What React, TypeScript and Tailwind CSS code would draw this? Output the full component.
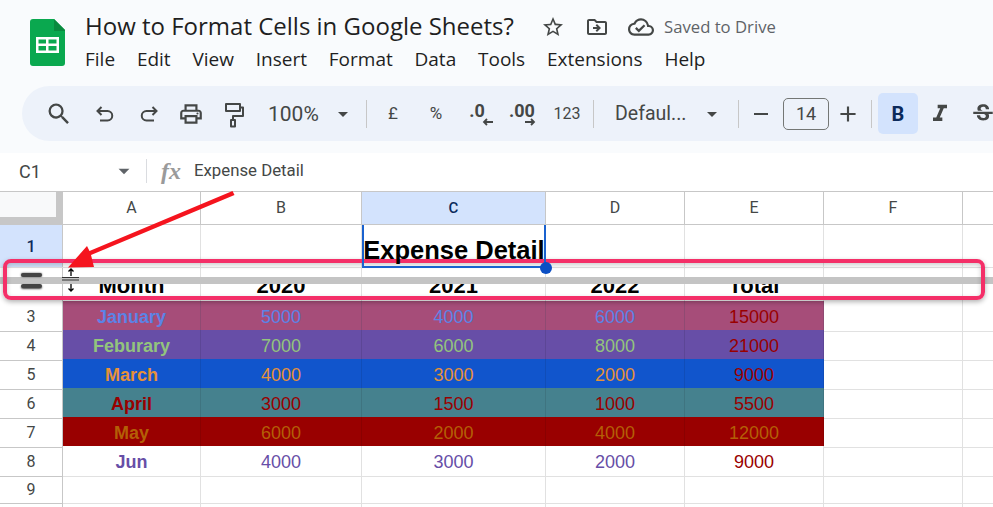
import {
  MdAdd,
  MdArrowDropDown,
  MdFormatItalic,
  MdOutlineCloudDone,
  MdOutlineDriveFileMove,
  MdOutlinePrint,
  MdRemove,
  MdSearch,
  MdStarBorder,
  MdStrikethroughS,
} from 'react-icons/md'

const GRID =
  'grid grid-cols-[63px_138px_161px_184px_139px_139px_139px_139px_30px]'

const MENU = ['File', 'Edit', 'View', 'Insert', 'Format', 'Data', 'Tools', 'Extensions', 'Help']
const COLUMNS = ['A', 'B', 'C', 'D', 'E', 'F', '']
const HEADINGS = ['Month', '2020', '2021', '2022', 'Total']

type Row = {
  n: number
  bg: string
  color: string
  lastColor: string
  line: string
  cells: string[]
}

const ROWS: Row[] = [
  { n: 3, bg: 'bg-[#a64d79]', color: 'text-[#5b83e6]', lastColor: 'text-[#990000]', line: 'border-[#8f4a72]', cells: ['January', '5000', '4000', '6000', '15000'] },
  { n: 4, bg: 'bg-[#674ea7]', color: 'text-[#93c47d]', lastColor: 'text-[#990000]', line: 'border-[#5c4696]', cells: ['Feburary', '7000', '6000', '8000', '21000'] },
  { n: 5, bg: 'bg-[#1155cc]', color: 'text-[#e69138]', lastColor: 'text-[#990000]', line: 'border-[#104db8]', cells: ['March', '4000', '3000', '2000', '9000'] },
  { n: 6, bg: 'bg-[#45818e]', color: 'text-[#990000]', lastColor: 'text-[#990000]', line: 'border-[#3f7480]', cells: ['April', '3000', '1500', '1000', '5500'] },
  { n: 7, bg: 'bg-[#990000]', color: 'text-[#b45f06]', lastColor: 'text-[#b45f06]', line: 'border-[#8a0000]', cells: ['May', '6000', '2000', '4000', '12000'] },
  { n: 8, bg: 'bg-white', color: 'text-[#674ea7]', lastColor: 'text-[#990000]', line: 'border-[#e1e1e1]', cells: ['Jun', '4000', '3000', '2000', '9000'] },
]

function SheetsLogo() {
  return (
    <svg width="35" height="47" viewBox="0 0 35 47" className="mt-[19px] flex-none">
      <path d="M3 0h21l11 11v33a3 3 0 0 1-3 3H3a3 3 0 0 1-3-3V3a3 3 0 0 1 3-3z" fill="#0aa84f" />
      <path d="M24 0l11 11v1H24z" fill="#0a8a3f" />
      <path d="M6 18h23v16H6zm2.500 2.500v4h7.500v-4zm10 0v4h8v-4zm-10 6.500v4.500h7.500V27zm10 0v4.500h8V27z" fill="#fff" fillRule="evenodd" />
    </svg>
  )
}

function UndoIcon({ flip }: { flip?: boolean }) {
  return (
    <svg width="22" height="22" viewBox="0 0 22 22" className={flip ? '-scale-x-100' : ''}>
      <path d="M7.500 4L3.500 8l4 4M3.500 8H13.500a4.750 4.750 0 0 1 0 9.500H6" fill="none" stroke="#444746" strokeWidth="2" />
    </svg>
  )
}

function PaintIcon() {
  return (
    <svg width="20" height="26" viewBox="0 0 20 26" className="mt-[2px]">
      <path
        d="M2 2h14v7H2zM16 5.500h3v8.500H9v4M7 18h4v6.500H7z"
        fill="none"
        stroke="#444746"
        strokeWidth="2"
        strokeLinejoin="round"
      />
    </svg>
  )
}

function Separator({ left, right }: { left: number; right: number }) {
  return <div className="h-[28px] w-px flex-none bg-[#c7c7c7]" style={{ marginLeft: left, marginRight: right }} />
}

function Slot({ width, children }: { width: number; children: React.ReactNode }) {
  return (
    <div className="flex flex-none items-center justify-center" style={{ width }}>
      {children}
    </div>
  )
}

function Toolbar() {
  return (
    <div className="ml-[22px] flex h-[55px] items-center overflow-hidden rounded-l-[28px] bg-[#edf2fa] pl-[15px] font-['Roboto',sans-serif] text-[#444746]">
      <Slot width={44}><MdSearch className="size-[28px] text-[#444746]" /></Slot>
      <Slot width={48}><UndoIcon /></Slot>
      <Slot width={40}><UndoIcon flip /></Slot>
      <Slot width={44}><MdOutlinePrint className="size-[26px]" /></Slot>
      <Slot width={42}><PaintIcon /></Slot>
      <span className="ml-[13px] mt-[2px] w-[63px] flex-none text-[21px]">100%</span>
      <MdArrowDropDown className="size-[24px] flex-none" />
      <Separator left={11} right={0} />
      <Slot width={52}><span className="text-[17px]">£</span></Slot>
      <Slot width={34}><span className="text-[17px]">%</span></Slot>
      <Slot width={48}>
        <span className="relative -mt-[5px] text-[18px] font-bold leading-none">
          .0
          <svg width="12" height="8" viewBox="0 0 12 8" className="absolute -right-[9px] top-[16px]">
            <path d="M11 4H2M5 1L2 4l3 3" fill="none" stroke="#444746" strokeWidth="1.8" />
          </svg>
        </span>
      </Slot>
      <Slot width={42}>
        <span className="relative -mt-[5px] text-[18px] font-bold leading-none">
          .00
          <svg width="12" height="8" viewBox="0 0 12 8" className="absolute -right-[1px] top-[16px]">
            <path d="M1 4h9M7 1l3 3-3 3" fill="none" stroke="#444746" strokeWidth="1.8" />
          </svg>
        </span>
      </Slot>
      <Slot width={48}><span className="text-[16px]">123</span></Slot>
      <Separator left={2} right={0} />
      <span className="ml-[21px] w-[85px] flex-none text-[19.5px]">Defaul...</span>
      <MdArrowDropDown className="size-[24px] flex-none" />
      <Separator left={14} right={0} />
      <Slot width={44}><MdRemove className="size-[24px]" /></Slot>
      <div className="flex h-[32px] w-[46px] flex-none items-center justify-center rounded-[5px] border border-[#747775] text-[18px]">14</div>
      <Slot width={38}><MdAdd className="size-[26px]" /></Slot>
      <Separator left={4} right={6} />
      <div className="flex h-[41px] w-[40px] flex-none items-center justify-center rounded-[5px] bg-[#d3e3fd] text-[20px] font-bold text-[#0b2a5b]">B</div>
      <Slot width={44}><MdFormatItalic className="size-[28px]" /></Slot>
      <Slot width={42}><MdStrikethroughS className="size-[26px]" /></Slot>
    </div>
  )
}

function FormulaBar() {
  return (
    <div className="flex h-[39px] items-center border-b border-[#c7c7c7] bg-white pb-[2px] font-['Roboto',sans-serif] text-[#444746]">
      <span className="ml-[19px] w-[92px] flex-none text-[18px]">C1</span>
      <MdArrowDropDown className="size-[26px] flex-none text-[#5f6368]" />
      <div className="ml-[9px] h-[24px] w-px flex-none bg-[#dadce0]" />
      <span className="ml-[14px] w-[33px] flex-none font-['Liberation_Serif',serif] text-[24px] font-bold italic leading-none text-[#9a9a9a]">fx</span>
      <span className="text-[16.8px]">Expense Detail</span>
    </div>
  )
}

function ColumnHeaders() {
  return (
    <div className={`${GRID} h-[33px] border-b border-[#c7c7c7] font-['Roboto',sans-serif] text-[16px] text-[#444746]`}>
      <div className="h-[32px] border-r-[7px] border-b-[7px] border-[#c7c7c7] bg-[#f8f9fa]" />
      {COLUMNS.map((c) => (
        <div
          key={c}
          className={
            c === 'C'
              ? 'flex items-center justify-center border-r border-[#c7c7c7] bg-[#d3e3fd] text-[15px] font-medium text-[#0b2a5b]'
              : 'flex items-center justify-center border-r border-[#c7c7c7]'
          }
        >
          {c}
        </div>
      ))}
    </div>
  )
}

function TitleRow() {
  return (
    <div className={`${GRID} h-[43px] border-b border-[#e1e1e1]`}>
      <div className="flex items-center justify-center border-r border-[#c7c7c7] bg-[#d3e3fd] pt-[1px] font-['Roboto',sans-serif] text-[16px] font-medium text-[#0b2a5b]">
        1
      </div>
      <div className="border-r border-[#e1e1e1]" />
      <div className="border-r border-[#e1e1e1]" />
      <div className="relative z-10 flex items-end justify-center pb-[2px] text-[25.5px] font-bold leading-[30px] text-black">
        Expense Detail
        <div className="absolute -bottom-px left-0 right-0 top-0 border-2 border-t-0 border-[#1a62cf]" />
        <div className="absolute bottom-[-7px] right-[-6px] size-[12px] rounded-full bg-[#0b4fc4]" />
      </div>
      {['d', 'e', 'f', 'g', 'h'].map((k) => (
        <div key={k} className="border-r border-[#e1e1e1]" />
      ))}
    </div>
  )
}

function HeadingRow() {
  return (
    <div className={`${GRID} h-[33px]`}>
      <div className="border-r border-[#c7c7c7] bg-white" />
      {HEADINGS.map((h) => (
        <div key={h} className="border-r border-[#e1e1e1] pt-[16px] text-center text-[22px] font-bold leading-[22px] text-black">
          <div className="h-[16px] overflow-hidden">
            <div className="-mt-[9px]">{h}</div>
          </div>
        </div>
      ))}
      <div className="border-r border-[#e1e1e1]" />
      <div className="border-r border-[#e1e1e1]" />
    </div>
  )
}

function DataRow({ row }: { row: Row }) {
  return (
    <div className={`${GRID} h-[29px]`}>
      <RowNumber n={row.n} />
      {row.cells.map((c, i) => (
        <div
          key={i}
          className={`flex items-center justify-center border-r border-b pt-[3px] text-[18px] ${row.line} ${row.bg} ${i === 0 ? 'font-bold' : ''} ${i === 4 ? row.lastColor : row.color}`}
        >
          {c}
        </div>
      ))}
      <BlankCell />
      <BlankCell />
    </div>
  )
}

function RowNumber({ n }: { n?: number }) {
  return (
    <div className="flex items-center justify-center border-r border-b border-[#c7c7c7] pt-[2px] font-['Roboto',sans-serif] text-[16px] text-[#444746]">
      {n}
    </div>
  )
}

function BlankCell() {
  return <div className="border-r border-b border-[#e1e1e1]" />
}

function EmptyRow({ n }: { n?: number }) {
  return (
    <div className={`${GRID} h-[29px]`}>
      <RowNumber n={n} />
      {[0, 1, 2, 3, 4, 5, 6].map((k) => (
        <BlankCell key={k} />
      ))}
    </div>
  )
}

function DragMarkup() {
  return (
    <>
      {/* row being dragged */}
      <div className="absolute inset-x-0 top-[277px] h-[7px] bg-[#c4c4c4]" />
      <div className="absolute left-[21px] top-[273px] h-[4px] w-[21px] rounded-full bg-[#444] shadow-[0_0_2px_#444]" />
      <div className="absolute left-[21px] top-[284px] h-[4px] w-[21px] rounded-full bg-[#444] shadow-[0_1px_2px_#444]" />
      {/* resize cursor */}
      <svg width="18" height="25" viewBox="0 0 18 25" className="absolute left-[62px] top-[267px]">
        <path d="M0 10.500h17M0 13h17" fill="none" stroke="#222" strokeWidth="0.9" />
        <path d="M9 2v7M6.500 4.500L9 2l2.500 2.500M9 17v7M6.500 21.500L9 24l2.500-2.500" fill="none" stroke="#000" strokeWidth="1.3" />
      </svg>
      {/* callout */}
      <div className="absolute left-[3px] top-[259px] h-[41px] w-[982px] rounded-[8px] border-[4px] border-[#f42f68] shadow-[0_2px_5px_rgba(0,0,0,0.3),inset_0_2px_5px_rgba(0,0,0,0.2)]" />
      <svg width="240" height="85" viewBox="0 0 240 85" className="absolute left-0 top-[188px]">
        <path d="M232.500 3L234.500 7 91 67l3 12-26 .5 19-21.500 2.500 5z" fill="#f5141e" />
      </svg>
    </>
  )
}

export default function App() {
  return (
    <div className="relative h-[507px] w-[993px] overflow-hidden bg-[#f9fbfd] font-['Liberation_Sans',sans-serif]">
      <div className="flex h-[86px] pl-[30px]">
        <SheetsLogo />
        <div className="ml-[20px] font-['Open_Sans',sans-serif] text-[#1f1f1f]">
          <div className="mt-[10px] flex h-[31px] items-center">
            <span className="w-[456px] flex-none text-[24px]">How to Format Cells in Google Sheets?</span>
            <MdStarBorder className="mt-[2px] size-[24px] flex-none text-[#444746]" />
            <MdOutlineDriveFileMove className="ml-[20px] mt-[2px] size-[24px] flex-none text-[#444746]" />
            <MdOutlineCloudDone className="ml-[19px] mt-[2px] size-[26px] flex-none text-[#444746]" />
            <span className="ml-[10px] mt-[2px] text-[16.7px] text-[#5f6368]">Saved to Drive</span>
          </div>
          <div className="flex gap-[21.8px] pt-[4px] text-[19px] text-[#1f1f1f]">
            {MENU.map((m) => (
              <span key={m}>{m}</span>
            ))}
          </div>
        </div>
      </div>
      <Toolbar />
      <div className="h-[12px]" />
      <FormulaBar />
      <div className="bg-white">
        <ColumnHeaders />
        <TitleRow />
        <HeadingRow />
        {ROWS.map((r) => (
          <DataRow key={r.n} row={r} />
        ))}
        <EmptyRow n={9} />
        <EmptyRow />
      </div>
      <DragMarkup />
    </div>
  )
}
